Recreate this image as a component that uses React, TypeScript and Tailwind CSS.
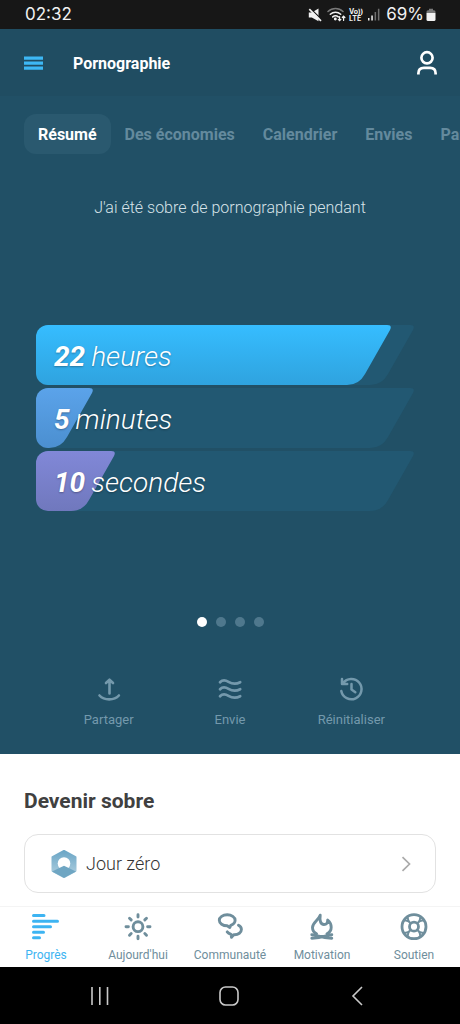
import React, { useState } from 'react';

const TABS = ['Résumé', 'Des économies', 'Calendrier', 'Envies', 'Partager'];

const TIME_BARS = [
  { value: 22, unit: 'heures', percent: 94, fill: 'bg-linear-to-b from-[#36bdff] to-[#2fa3df]', from: '#36bdff', to: '#2fa3df' },
  { value: 5, unit: 'minutes', percent: 15, fill: 'bg-linear-to-b from-[#5ba3ea] to-[#4b8fd0]', from: '#5ba3ea', to: '#4b8fd0' },
  { value: 10, unit: 'secondes', percent: 21, fill: 'bg-linear-to-b from-[#8188d8] to-[#7078bd]', from: '#8188d8', to: '#7078bd' },
];

const strokeProps = {
  fill: 'none',
  stroke: 'currentColor',
  strokeLinecap: 'round' as const,
  strokeLinejoin: 'round' as const,
};

const ShareIcon = () => (
  <svg viewBox="0 0 26 26" className="w-[26px] h-[26px]" strokeWidth="2.6" {...strokeProps}>
    <path d="M13.500 16.500V3M10 6l3.500-3.300L17 6M3.500 18.500c4.700 5.200 14.700 5.200 19.400 0" />
  </svg>
);

const WavesIcon = () => (
  <svg viewBox="0 0 26 26" className="w-[26px] h-[26px]" strokeWidth="2.700" {...strokeProps}>
    <path d="M3 5.300C5 3.200 8.500 3 11.500 4.800s7 2.800 11.700.4M3 12.300c2-2.100 5.500-2.300 8.500-.5s7 2.800 11.700.4M3 19.300c2-2.100 5.500-2.300 8.500-.5s7 2.800 11.700.4" />
  </svg>
);

const ResetIcon = () => (
  <svg viewBox="0 0 26 26" className="w-[26px] h-[26px]" strokeWidth="2.500" {...strokeProps}>
    <path d="M3.300 14A10.200 10.200 0 1 0 5 6.200M4 2v5h5.200M13.500 7v5.500l3.800 2.800" />
  </svg>
);

const ProgressIcon = () => (
  <svg viewBox="0 0 28 28" className="w-7 h-7" strokeWidth="3" {...strokeProps}>
    <path d="M1.500 2.500h10.500M1.500 8.300h24M1.500 13.800h17M1.500 19.300h10M1.500 24.800h6" />
  </svg>
);

const SunIcon = () => (
  <svg viewBox="0 0 28 28" className="w-7 h-7" strokeWidth="2.900" {...strokeProps}>
    <circle cx="14" cy="13.700" r="4.900" />
    <path d="M14 1.700v2.400M14 23.300v2.400M2 13.700h2.400M23.600 13.700H26M5.500 5.200l1.700 1.700M20.800 20.500l1.700 1.700M5.500 22.200l1.700-1.700M20.800 6.900l1.700-1.700" />
  </svg>
);

const CommunityIcon = () => (
  <svg viewBox="0 0 28 28" className="w-7 h-7" strokeWidth="2.900" {...strokeProps}>
    <path d="M11.200 12.800C6.800 12.800 3.300 10.400 3.300 7.300s3.500-5.500 7.900-5.500 7.900 2.400 7.900 5.500c0 2.200-1.700 4.100-4.300 5l-1 2.200z" />
    <path d="M22.500 12.200c1.700.9 2.900 2.500 2.900 4.300 0 3-3.100 5.300-6.900 5.300h-.8l-2.200 2.500-.4-2.900c-1.700-.5-3.100-1.300-3.900-2.500" />
  </svg>
);

const CampfireIcon = () => (
  <svg viewBox="0 0 28 28" className="w-7 h-7" strokeWidth="2.900" {...strokeProps}>
    <path d="M8.500 20.800C6 19.500 4.500 17.200 4.500 14.500c0-5.200 5.700-6.800 7.700-12.300-.7 5 .2 9.300 3.800 9.300 2.500 0 3.900-1.700 3.700-4.500 2.200 1.800 3.500 4.300 3.500 7.200 0 2.800-1.500 5.200-4.200 6.600" />
    <path d="M3.800 21.800c4.500 0 8.500 3 20 3.400M3.800 25.200c11.500-.4 15.500-3.400 20-3.400" />
  </svg>
);

const LifebuoyIcon = () => (
  <svg viewBox="0 0 28 28" className="w-7 h-7" strokeWidth="2.800" {...strokeProps}>
    <circle cx="14" cy="13.700" r="12" />
    <circle cx="14" cy="13.700" r="4.500" />
    <path
      strokeWidth="2"
      d="M7.600 4.300c.2 2.900 1 4.500 2.700 5.800M20.400 4.300c-.2 2.900-1 4.500-2.700 5.800M7.600 23.100c.2-2.900 1-4.500 2.700-5.800M20.400 23.100c-.2-2.900-1-4.500-2.700-5.800M4.600 7.300c2.900.2 4.500 1 5.800 2.700M23.400 7.300c-2.900.2-4.500 1-5.800 2.700M4.600 20.100c2.900-.2 4.500-1 5.800-2.700M23.400 20.100c-2.900-.2-4.500-1-5.800-2.700"
    />
  </svg>
);

const ACTIONS = [
  { icon: <ShareIcon />, label: 'Partager' },
  { icon: <WavesIcon />, label: 'Envie' },
  { icon: <ResetIcon />, label: 'Réinitialiser' },
];

const NAV_ITEMS = [
  { icon: <ProgressIcon />, label: 'Progrès' },
  { icon: <SunIcon />, label: "Aujourd'hui" },
  { icon: <CommunityIcon />, label: 'Communauté' },
  { icon: <CampfireIcon />, label: 'Motivation' },
  { icon: <LifebuoyIcon />, label: 'Soutien' },
];

const StatusBar: React.FC = () => (
  <div className="flex items-center justify-between h-[29px] pl-[25px] pr-6 bg-[#171717] text-[#f2f2f2] font-['Inter',sans-serif] text-[17px] leading-none">
    <span>02:32</span>
    <div className="flex items-center">
      <svg viewBox="0 0 14 14" className="w-3.5 h-3.5 mr-[5px]" fill="currentColor">
        <path d="M.8 4.500h3L10.500.5v12.800L3.800 9.500h-3z" />
        <path d="M2.300.5 14 12" stroke="#171717" strokeWidth="1.400" />
        <path d="M1.300 1.200 13 12.900" stroke="currentColor" strokeWidth="1.700" />
      </svg>
      <svg viewBox="0 0 19 15" className="w-[19px] h-[15px] mr-[3px]" fill="none" stroke="currentColor" strokeWidth="1.500" strokeLinecap="round">
        <path d="M1 4.500c4.300-4 10.700-4 15 0" opacity=".45" />
        <path d="M3.300 7.300c3-2.900 7.400-2.900 10.400 0M5.700 9.900c1.700-1.500 3.900-1.500 5.600 0" />
        <circle cx="8.300" cy="12" r=".7" fill="currentColor" />
        <path d="M12.600 9.500v4M11.300 12.300l1.300 1.300 1.300-1.300M16.600 13.500v-4M15.300 10.500l1.300-1.300 1.300 1.300" strokeWidth="1.200" />
      </svg>
      <span className="flex flex-col mr-[5px] font-bold text-[7px] leading-[7px]">
        <span>Vo))</span>
        <span>LTE</span>
      </span>
      <svg viewBox="0 0 12 13" className="w-3 h-[13px] mr-[6px]" fill="currentColor">
        <path d="M0 10h1.500v2.500H0zM3.300 7.500h1.500v5H3.300z" />
        <path d="M6.600 4h1.500v8.500H6.600zM9.900.8h1.500v11.700H9.900z" opacity=".4" />
      </svg>
      <span>69%</span>
      <svg viewBox="0 0 10 14" className="w-2.5 h-3.5 ml-[2px]" fill="currentColor">
        <path d="M3 .8h4v1.400h1q1.500 0 1.500 1.500V5H.5V3.700q0-1.500 1.500-1.500h1z" opacity=".45" />
        <path d="M.5 5h9v6.500q0 1.500-1.500 1.500H2Q.5 13 .5 11.500z" />
      </svg>
    </div>
  </div>
);

const CAP_PATH = 'M0 0H40Q45.500 0 43 5L18 49Q12 60 0 60Z';

const TimeBar: React.FC<(typeof TIME_BARS)[number]> = ({ value, unit, percent, fill, from, to }) => (
  <div className="relative h-[60px]">
    <div className="flex">
      <div className="grow rounded-l-xl bg-[#225872]"></div>
      <svg viewBox="0 0 44 60" className="w-11 h-[60px] shrink-0" fill="#225872">
        <path d={CAP_PATH} />
      </svg>
    </div>
    <div className="absolute inset-y-0 left-0 flex" style={{ width: `${percent}%` }}>
      <div className={`grow rounded-l-xl ${fill}`}></div>
      <svg viewBox="0 0 44 60" className="w-11 h-[60px] shrink-0">
        <defs>
          <linearGradient id={`cap-${unit}`} x1="0" y1="0" x2="0" y2="1">
            <stop offset="0" stopColor={from} />
            <stop offset="1" stopColor={to} />
          </linearGradient>
        </defs>
        <path d={CAP_PATH} fill={`url(#cap-${unit})`} />
      </svg>
    </div>
    <p className="absolute inset-0 flex items-center gap-[6px] pl-[18px] pt-1 text-[28px] italic font-light text-white text-shadow-[0_1px_2px_rgb(0_0_0/0.3)]">
      <span className="font-bold">{value}</span>
      <span>{unit}</span>
    </p>
  </div>
);

const App: React.FC = () => {
  const [tab, setTab] = useState(0);

  return (
    <div className="min-h-screen flex flex-col bg-white font-['Roboto',sans-serif] overflow-x-hidden">
      <StatusBar />

      <header className="flex items-center h-[67px] px-6 bg-[#204d62]">
        <button aria-label="Menu" className="text-[#3db8f5]">
          <svg viewBox="0 0 19 14" className="w-[19px] h-3.5" fill="currentColor">
            <path d="M0 .5h19v3.200H0zM0 5.500h19v3.200H0zM0 10.500h19v3.200H0z" />
          </svg>
        </button>
        <h1 className="ml-[30px] pt-0.5 text-base font-bold text-white">Pornographie</h1>
        <button aria-label="Profil" className="ml-auto -mr-0.5 text-white">
          <svg viewBox="0 0 22 26" className="w-[22px] h-[26px]" strokeWidth="2.700" fill="none" stroke="currentColor">
            <circle cx="11" cy="7.800" r="5.600" />
            <path d="M2.400 24.500v-1.200c0-3.500 2.200-5.500 5.500-5.500h6.200c3.300 0 5.500 2 5.500 5.500v1.200" />
          </svg>
        </button>
      </header>

      <section className="bg-[#215066] pt-[18px] pb-6">
        <div className="flex pl-6 overflow-hidden">
          {TABS.map((label, idx) => (
            <button
              key={label}
              onClick={() => setTab(idx)}
              className={`h-10 px-3.5 pt-0.5 shrink-0 rounded-xl text-base font-bold ${idx === tab ? 'bg-[#2a596f] text-white' : 'text-[#648a9d]'}`}
            >
              {label}
            </button>
          ))}
        </div>

        <p className="mt-[42px] text-center text-base leading-6 font-light text-[#d7e3e9]">
          J'ai été sobre de pornographie pendant
        </p>

        <div className="mt-[105px] ml-9 mr-[46px] flex flex-col gap-[3px]">
          {TIME_BARS.map((bar) => (
            <TimeBar key={bar.unit} {...bar} />
          ))}
        </div>

        <div className="mt-[106px] flex justify-center gap-[9px]">
          {[0, 1, 2, 3].map((dot) => (
            <span key={dot} className={`w-2.5 h-2.5 rounded-full ${dot === 0 ? 'bg-white' : 'bg-[#4f788d]'}`}></span>
          ))}
        </div>

        <div className="mt-[50px] px-12 grid grid-cols-3">
          {ACTIONS.map((action) => (
            <button key={action.label} className="flex flex-col items-center gap-[7px] text-[#7499ac]">
              {action.icon}
              <span className="text-[13px] leading-5">{action.label}</span>
            </button>
          ))}
        </div>
      </section>

      <section className="grow px-6 pt-8 pb-[13px]">
        <h2 className="pt-px text-[21px] leading-7 font-bold text-[#404040]">Devenir sobre</h2>
        <a href="#jour-zero" className="mt-[19px] flex items-center h-[59px] pl-[25px] pr-6 border border-[#e2e2e2] rounded-[14px]">
          <svg viewBox="0 0 28 30" className="w-7 h-[30px]">
            <defs>
              <linearGradient id="badge" x1="0" y1="0" x2="0" y2="1">
                <stop offset="0" stopColor="#6ba6c6" />
                <stop offset="1" stopColor="#b4d2e1" />
              </linearGradient>
            </defs>
            <path d="M14 2 25.500 8.200V21.800L14 28 2.500 21.800V8.200Z" fill="url(#badge)" stroke="url(#badge)" strokeWidth="2" strokeLinejoin="round" />
            <circle cx="14" cy="14.500" r="6.300" fill="#fff" />
            <path d="M14 16.800 26 22.500 14 29 2 22.500Z" fill="#6fa6c3" />
          </svg>
          <span className="ml-2 text-lg font-light text-[#333]">Jour zéro</span>
          <svg viewBox="0 0 10 16" className="ml-auto w-2.5 h-4" fill="none" stroke="#aaa" strokeWidth="1.700">
            <path d="M1.500 1.200 8.500 8l-7 6.800" />
          </svg>
        </a>
      </section>

      <nav className="grid grid-cols-5 pt-[6px] pb-[3px] border-t border-[#f4f4f4] bg-white">
        {NAV_ITEMS.map((item, idx) => (
          <a
            key={item.label}
            href={`#${idx}`}
            className={`flex flex-col items-center gap-[5px] ${idx === 0 ? 'text-[#3db4f2]' : 'text-[#6f8e9c]'}`}
          >
            {item.icon}
            <span className="text-xs leading-[18px]">{item.label}</span>
          </a>
        ))}
      </nav>

      <div className="flex items-center justify-between h-[57px] pl-[90px] pr-[93px] bg-black text-[#c9c9c9]">
        <button aria-label="Applications récentes">
          <svg viewBox="0 0 20 20" className="w-5 h-5" fill="none" stroke="currentColor" strokeWidth="1.600">
            <path d="M2 1v18M9.800 1v18M17.500 1v18" />
          </svg>
        </button>
        <button aria-label="Accueil">
          <svg viewBox="0 0 20 20" className="w-5 h-5" fill="none" stroke="currentColor" strokeWidth="1.600">
            <rect x="1" y="1" width="18" height="18" rx="5.500" />
          </svg>
        </button>
        <button aria-label="Retour">
          <svg viewBox="0 0 20 20" className="w-5 h-5" fill="none" stroke="currentColor" strokeWidth="1.600">
            <path d="M15 1 6 10l9 9" />
          </svg>
        </button>
      </div>
    </div>
  );
};

export default App;
